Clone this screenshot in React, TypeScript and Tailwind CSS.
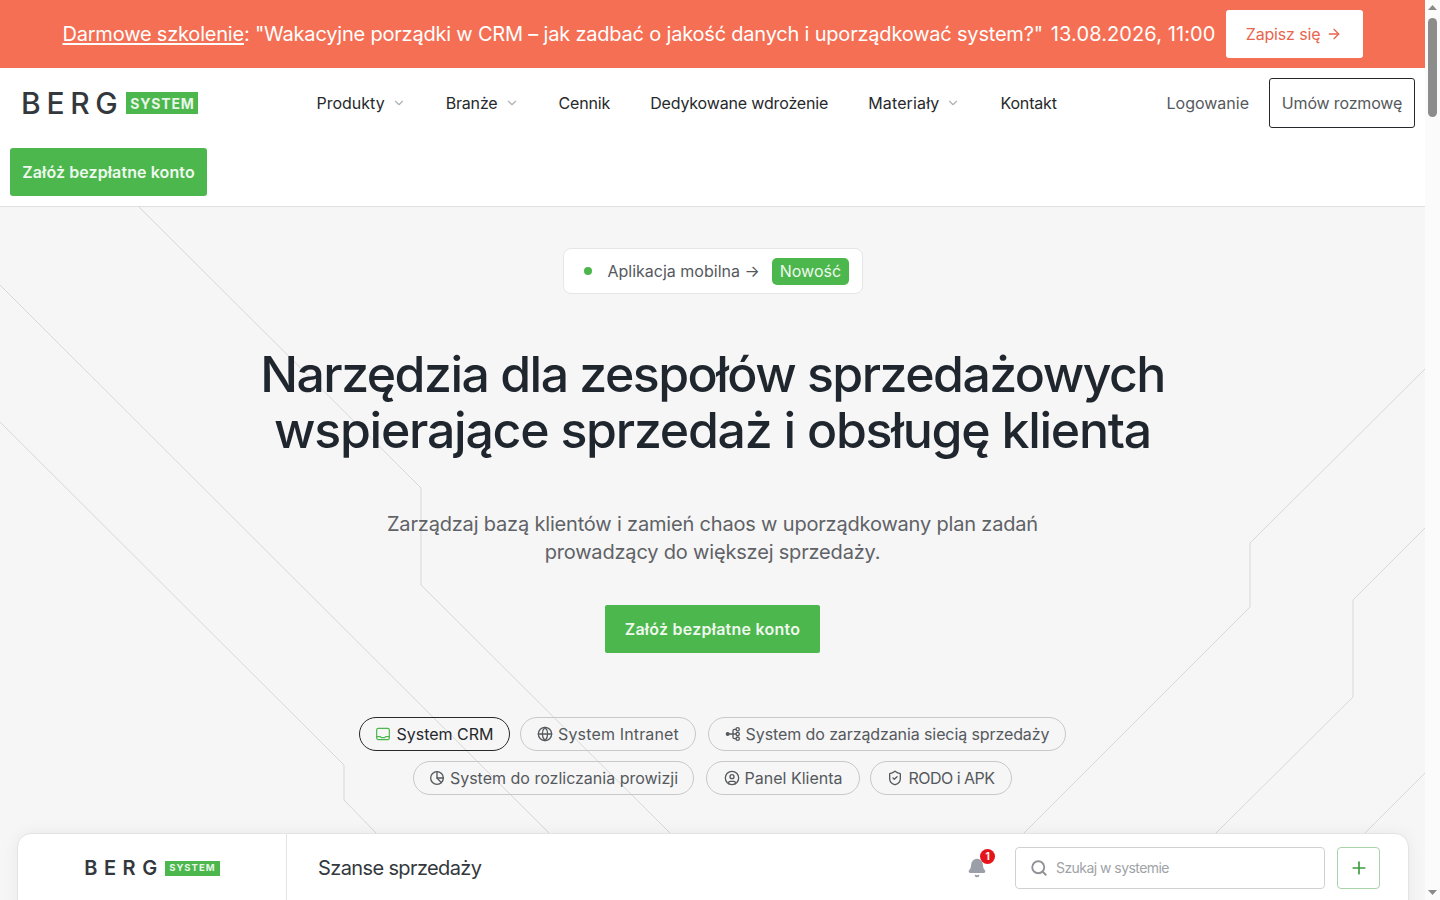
import { ChevronDown, ArrowRight, Globe, CircleUser, ShieldCheck, Bell, Search, Plus } from "lucide-react";

function Logo({ small }: { small?: boolean }) {
  return (
    <div className="flex items-center">
      <span className={small ? "text-[20px] leading-none font-semibold tracking-[6.6px] text-[#33383d]" : "text-[30px] leading-none font-medium tracking-[0.19em] text-[#33383d]"}>BERG</span>
      <span className={small ? "ml-px flex h-[15px] w-[55px] items-center justify-center bg-[#4cb74d] text-[9.5px] font-bold tracking-[1px] text-[#e8f6e8]" : "ml-[3px] flex h-[22px] w-[72px] items-center justify-center bg-[#4cb74d] text-[14px] font-bold tracking-[0.06em] text-[#e8f6e8]"}>SYSTEM</span>
    </div>
  );
}

function NavItem({ label, menu, className }: { label: string; menu?: boolean; className?: string }) {
  return (
    <a className={`flex items-center gap-[7px] text-[16px] text-[#26292c] ${className ?? ""}`}>
      {label}
      {menu && <ChevronDown className="h-3.5 w-3.5 text-[#aeb2b6]" />}
    </a>
  );
}

function Chip({ icon, label, active, className }: { icon: React.ReactNode; label: string; active?: boolean; className: string }) {
  return (
    <a className={`flex h-[34px] items-center justify-center gap-[5px] rounded-full border text-[16px] ${active ? "border-[#26292c] text-[#26292c]" : "border-[#c6c8ca] text-[#55595d]"} ${className}`}>
      {icon}
      {label}
    </a>
  );
}

function LaptopIcon() {
  return (
    <svg className="h-4 w-4 text-[#4cb74d]" viewBox="0 0 24 24" fill="none" stroke="currentColor" strokeWidth="1.8" strokeLinecap="round" strokeLinejoin="round">
      <rect x="2.5" y="3.5" width="19" height="17" rx="2.5" />
      <path d="M2.5 16h5.5l1.5 1.5h5L16 16h5.5" />
    </svg>
  );
}

function NetworkIcon() {
  return (
    <svg className="h-4 w-4" viewBox="0 0 24 24" fill="none" stroke="currentColor" strokeWidth="2" strokeLinecap="round" strokeLinejoin="round">
      <circle cx="4" cy="12" r="2" fill="currentColor" />
      <circle cx="19" cy="5" r="2.5" />
      <circle cx="19" cy="12" r="2.5" />
      <circle cx="19" cy="19" r="2.5" />
      <path d="M6 12h10.5M16.5 5H14a2 2 0 0 0-2 2v10a2 2 0 0 0 2 2h2.5" />
    </svg>
  );
}

function PieIcon() {
  return (
    <svg className="h-4 w-4" viewBox="0 0 24 24" fill="none" stroke="currentColor" strokeWidth="2" strokeLinecap="round" strokeLinejoin="round">
      <circle cx="12" cy="12" r="9.5" />
      <path d="M12 2.5V12h9.5" />
      <path d="M12 12l6.5 7" />
    </svg>
  );
}

function Backdrop() {
  // coordinates are relative to the top of the hero section (y = 207)
  return (
    <svg className="absolute left-0 top-0 h-[640px] w-[1425px]" viewBox="0 0 1425 640" fill="none" stroke="#d6d7d8" strokeWidth="1">
      <path d="M139 0 L421 281 V378 L670 626" />
      <path d="M0 78 L549 626" />
      <path d="M0 215 L344 558 V593 L376 626" />
      <path d="M1425 162 L1250 336 V400 L1024 626" />
      <path d="M1425 321 L1353 393 V490 L1216 626" />
      <path d="M1425 566 L1365 626" />
    </svg>
  );
}

function Scrollbar() {
  return (
    <div className="fixed right-0 top-0 flex h-[900px] w-[15px] flex-col items-center bg-[#fbfbfb]">
      <svg className="mt-[5px] h-[5px] w-[9px]" viewBox="0 0 9 5"><path d="M4.5 0L9 5H0z" fill="#8a8a8a" /></svg>
      <div className="mt-[8px] h-[99px] w-[9px] rounded-full bg-[#8c8c8c]" />
      <svg className="mt-auto mb-[5px] h-[5px] w-[9px]" viewBox="0 0 9 5"><path d="M0 0h9L4.5 5z" fill="#8a8a8a" /></svg>
    </div>
  );
}

export default function App() {
  return (
    <div className="min-h-[1400px] w-[1425px] bg-[#f6f6f6] font-['Inter',sans-serif] tracking-[-0.16px]">
      {/* Promo bar */}
      <div className="flex h-[68px] items-center justify-center gap-[10px] bg-[#f56f54] text-white">
        <p className="text-[20px] tracking-[-0.2px]">
          <span className="underline underline-offset-2">Darmowe szkolenie</span>: "Wakacyjne porządki w CRM – jak zadbać o jakość danych i uporządkować system?"
          <span className="ml-[8px] tracking-[0.1px]">13.08.2026, 11:00</span>
        </p>
        <a className="flex h-[48px] w-[137px] items-center justify-center gap-[6px] rounded-[3px] bg-white text-[16px] text-[#e8664e]">
          Zapisz się <ArrowRight className="h-4 w-4" />
        </a>
      </div>

      {/* Navbar */}
      <header className="border-b border-[#e0e0e0] bg-white pb-[10px]">
        <div className="flex h-[70px] items-center pl-[21px] pr-[10px]">
          <Logo />
          <nav className="ml-[118px] flex items-center gap-[40px]">
            <NavItem label="Produkty" menu className="tracking-normal" />
            <NavItem label="Branże" menu />
            <NavItem label="Cennik" />
            <NavItem label="Dedykowane wdrożenie" />
            <NavItem label="Materiały" menu className="tracking-[0.15px]" />
            <NavItem label="Kontakt" />
          </nav>
          <a className="ml-auto text-[16px] tracking-normal text-[#55595d]">Logowanie</a>
          <a className="ml-[20px] flex h-[50px] w-[146px] items-center justify-center rounded-[3px] border border-[#26292c] text-[16px] text-[#55595d]">Umów rozmowę</a>
        </div>
        <div className="mt-[10px] pl-[10px]">
          <a className="flex h-[48px] w-[197px] items-center justify-center rounded-[3px] bg-[#4cb74d] text-[16px] font-semibold tracking-[0.1px] text-[#eef8ee]">Załóż bezpłatne konto</a>
        </div>
      </header>

      {/* Hero */}
      <section className="relative overflow-hidden pt-[41px] text-center">
        <Backdrop />
        <div className="relative flex flex-col items-center">
          <a className="flex h-[46px] w-[300px] items-center rounded-[8px] border border-[#e6e6e6] bg-white pl-[20px] text-[16px] tracking-normal text-[#55595d]">
            <span className="h-2 w-2 rounded-full bg-[#4cb74d]" />
            <span className="ml-[16px]">Aplikacja mobilna →</span>
            <span className="ml-[12px] rounded-[5px] bg-[#4cb74d] px-[8px] py-[3px] leading-[21px] text-[#eef8ee]">Nowość</span>
          </a>
          <h1 className="mt-[52px] text-[50px] leading-[56px] font-medium text-[#1f262e]">
            <span className="block tracking-[-1.52px]">Narzędzia dla zespołów sprzedażowych</span>
            <span className="block tracking-[-1.24px]">wspierające sprzedaż i obsługę klienta</span>
          </h1>
          <p className="mt-[52px] text-[20px] leading-[28px] tracking-[-0.18px] text-[#5f6266]">
            Zarządzaj bazą klientów i zamień chaos w uporządkowany plan zadań
            <br />
            prowadzący do większej sprzedaży.
          </p>
          <a className="mt-[39px] flex h-[48px] w-[215px] items-center justify-center rounded-[2px] bg-[#4cb74d] text-[16px] font-semibold tracking-[0.25px] text-[#eef8ee]">Załóż bezpłatne konto</a>

          <div className="mt-[64px] flex w-[760px] flex-wrap justify-center gap-[10px]">
            <Chip active className="w-[151px] tracking-normal" label="System CRM" icon={<LaptopIcon />} />
            <Chip className="w-[176px] tracking-[0.15px]" label="System Intranet" icon={<Globe className="h-4 w-4" />} />
            <Chip className="ml-[2px] w-[358px] tracking-[-0.1px]" label="System do zarządzania siecią sprzedaży" icon={<NetworkIcon />} />
            <Chip className="w-[281px] tracking-normal" label="System do rozliczania prowizji" icon={<PieIcon />} />
            <Chip className="ml-[2px] w-[154px] tracking-normal" label="Panel Klienta" icon={<CircleUser className="h-4 w-4" />} />
            <Chip className="w-[142px] tracking-[-0.5px]" label="RODO i APK" icon={<ShieldCheck className="h-4 w-4" />} />
          </div>
        </div>

        {/* App preview */}
        <div className="relative ml-[17px] mr-[16px] mt-[38px] flex h-[500px] rounded-t-[14px] border border-[#e4e4e4] bg-white text-left shadow-[0_0_16px_rgba(0,0,0,0.06)]">
          <div className="flex w-[269px] shrink-0 justify-center border-r border-[#e4e4e4] pt-[24px]">
            <div className="h-[15px]">
              <Logo small />
            </div>
          </div>
          <div className="flex h-[67px] flex-1 items-center">
            <span className="ml-[31px] text-[20px] tracking-[-0.62px] text-[#33383d]">Szanse sprzedaży</span>
            <div className="relative ml-auto">
              <Bell className="h-5 w-5 fill-[#9a9fa8] text-[#9a9fa8]" />
              <span className="absolute -right-[8px] -top-[9px] flex h-[15px] w-[15px] items-center justify-center rounded-full bg-[#e5141b] text-[10px] font-bold text-white">1</span>
            </div>
            <div className="ml-[28px] flex h-[42px] w-[310px] items-center gap-[8px] rounded-[4px] border border-[#cfd1d3] pl-[14px] text-[14px] tracking-[-0.55px] text-[#a0a3a7]">
              <Search strokeWidth={2.5} className="h-[18px] w-[18px] text-[#8f9296]" />
              Szukaj w systemie
            </div>
            <div className="ml-[12px] mr-[28px] flex h-[42px] w-[43px] items-center justify-center rounded-[4px] border border-[#a9d4aa]">
              <Plus className="h-5 w-5 text-[#3f9a40]" />
            </div>
          </div>
        </div>
      </section>
      <Scrollbar />
    </div>
  );
}
